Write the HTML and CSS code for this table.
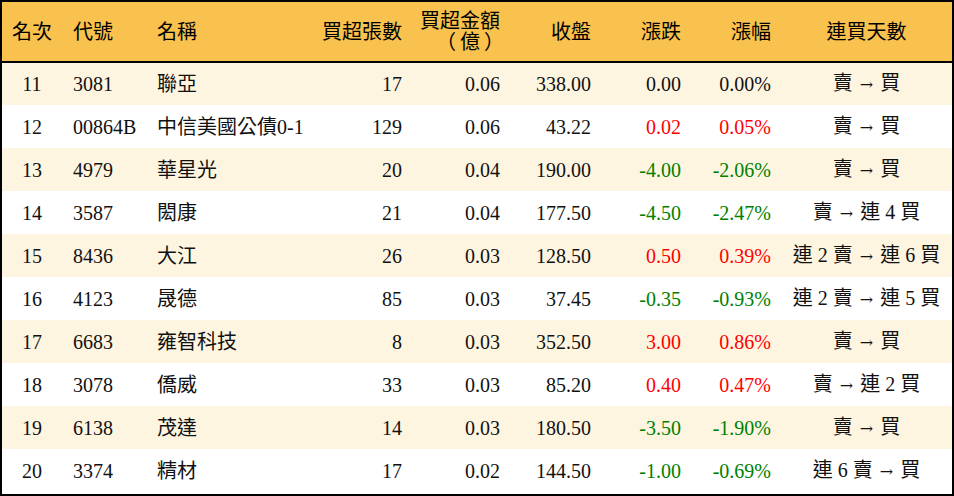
FILE: index.html
```html
<!DOCTYPE html>
<html lang="zh-Hant">
<head>
<meta charset="utf-8">
<link rel="stylesheet" href="styles.css">
</head>
<body>
<div class="frame">
<table class="grid">
<colgroup>
<col class="c1"><col class="c2"><col class="c3"><col class="c4"><col class="c5"><col class="c6"><col class="c7"><col class="c8"><col class="c9">
</colgroup>
<thead>
<tr>
<th class="ctr">名次</th>
<th class="lft">代號</th>
<th class="lft">名稱</th>
<th class="rgt">買超張數</th>
<th class="rgt two"><span class="ln">買超金額</span><span class="ln unit">（億）</span></th>
<th class="rgt">收盤</th>
<th class="rgt">漲跌</th>
<th class="rgt">漲幅</th>
<th class="ctr">連買天數</th>
</tr>
</thead>
<tbody>
<tr class="odd"><td class="ctr">11</td><td class="lft">3081</td><td class="lft">聯亞</td><td class="rgt">17</td><td class="rgt">0.06</td><td class="rgt">338.00</td><td class="rgt">0.00</td><td class="rgt">0.00%</td><td class="ctr">賣 <span class="arw">→</span> 買</td></tr>
<tr><td class="ctr">12</td><td class="lft">00864B</td><td class="lft">中信美國公債0-1</td><td class="rgt">129</td><td class="rgt">0.06</td><td class="rgt">43.22</td><td class="rgt up">0.02</td><td class="rgt up">0.05%</td><td class="ctr">賣 <span class="arw">→</span> 買</td></tr>
<tr class="odd"><td class="ctr">13</td><td class="lft">4979</td><td class="lft">華星光</td><td class="rgt">20</td><td class="rgt">0.04</td><td class="rgt">190.00</td><td class="rgt dn">-4.00</td><td class="rgt dn">-2.06%</td><td class="ctr">賣 <span class="arw">→</span> 買</td></tr>
<tr><td class="ctr">14</td><td class="lft">3587</td><td class="lft">閎康</td><td class="rgt">21</td><td class="rgt">0.04</td><td class="rgt">177.50</td><td class="rgt dn">-4.50</td><td class="rgt dn">-2.47%</td><td class="ctr">賣 <span class="arw">→</span> 連 4 買</td></tr>
<tr class="odd"><td class="ctr">15</td><td class="lft">8436</td><td class="lft">大江</td><td class="rgt">26</td><td class="rgt">0.03</td><td class="rgt">128.50</td><td class="rgt up">0.50</td><td class="rgt up">0.39%</td><td class="ctr">連 2 賣 <span class="arw">→</span> 連 6 買</td></tr>
<tr><td class="ctr">16</td><td class="lft">4123</td><td class="lft">晟德</td><td class="rgt">85</td><td class="rgt">0.03</td><td class="rgt">37.45</td><td class="rgt dn">-0.35</td><td class="rgt dn">-0.93%</td><td class="ctr">連 2 賣 <span class="arw">→</span> 連 5 買</td></tr>
<tr class="odd"><td class="ctr">17</td><td class="lft">6683</td><td class="lft">雍智科技</td><td class="rgt">8</td><td class="rgt">0.03</td><td class="rgt">352.50</td><td class="rgt up">3.00</td><td class="rgt up">0.86%</td><td class="ctr">賣 <span class="arw">→</span> 買</td></tr>
<tr><td class="ctr">18</td><td class="lft">3078</td><td class="lft">僑威</td><td class="rgt">33</td><td class="rgt">0.03</td><td class="rgt">85.20</td><td class="rgt up">0.40</td><td class="rgt up">0.47%</td><td class="ctr">賣 <span class="arw">→</span> 連 2 買</td></tr>
<tr class="odd"><td class="ctr">19</td><td class="lft">6138</td><td class="lft">茂達</td><td class="rgt">14</td><td class="rgt">0.03</td><td class="rgt">180.50</td><td class="rgt dn">-3.50</td><td class="rgt dn">-1.90%</td><td class="ctr">賣 <span class="arw">→</span> 買</td></tr>
<tr class="last"><td class="ctr">20</td><td class="lft">3374</td><td class="lft">精材</td><td class="rgt">17</td><td class="rgt">0.02</td><td class="rgt">144.50</td><td class="rgt dn">-1.00</td><td class="rgt dn">-0.69%</td><td class="ctr">連 6 賣 <span class="arw">→</span> 買</td></tr>
</tbody>
</table>
</div>
</body>
</html>
```

FILE: styles.css
```css
html, body {
  margin: 0;
  padding: 0;
  background: #ffffff;
}
.frame {
  width: 954px;
  height: 496px;
  box-sizing: border-box;
  border: 2px solid #000000;
  overflow: hidden;
}
.grid {
  width: 950px;
  border-collapse: collapse;
  border-spacing: 0;
  table-layout: fixed;
  font-family: "Liberation Serif", "Noto Sans CJK TC", serif;
  font-size: 20px;
  color: #111111;
}
.c1 { width: 60px; }
.c2 { width: 84px; }
.c3 { width: 164px; }
.c4 { width: 102px; }
.c5 { width: 98px; }
.c6 { width: 91px; }
.c7 { width: 90px; }
.c8 { width: 90px; }
.c9 { width: 171px; }
.grid th, .grid td {
  padding: 0;
  vertical-align: middle;
  white-space: nowrap;
  line-height: 22px;
}
.grid thead th {
  background: #f9c14d;
  font-weight: normal;
  height: 59px;
  box-sizing: content-box;
  border-bottom: 2px solid #000000;
  color: #000000;
}
.ln {
  display: block;
  line-height: 21px;
}
.unit {
  letter-spacing: 4px;
  margin-right: -8px;
}
.grid tbody tr {
  height: 43px;
}
.grid tbody tr.last {
  height: 44px;
}
.grid tbody tr.odd td {
  background: #fef5e1;
}
.arw {
  font-family: "DejaVu Serif", serif;
  font-size: 16px;
  margin: 0 2px;
}
.ctr { text-align: center; }
.lft { text-align: left; padding-left: 11px !important; }
.rgt { text-align: right; padding-right: 10px !important; }
.up { color: #ff0000; }
.dn { color: #008000; }
```
